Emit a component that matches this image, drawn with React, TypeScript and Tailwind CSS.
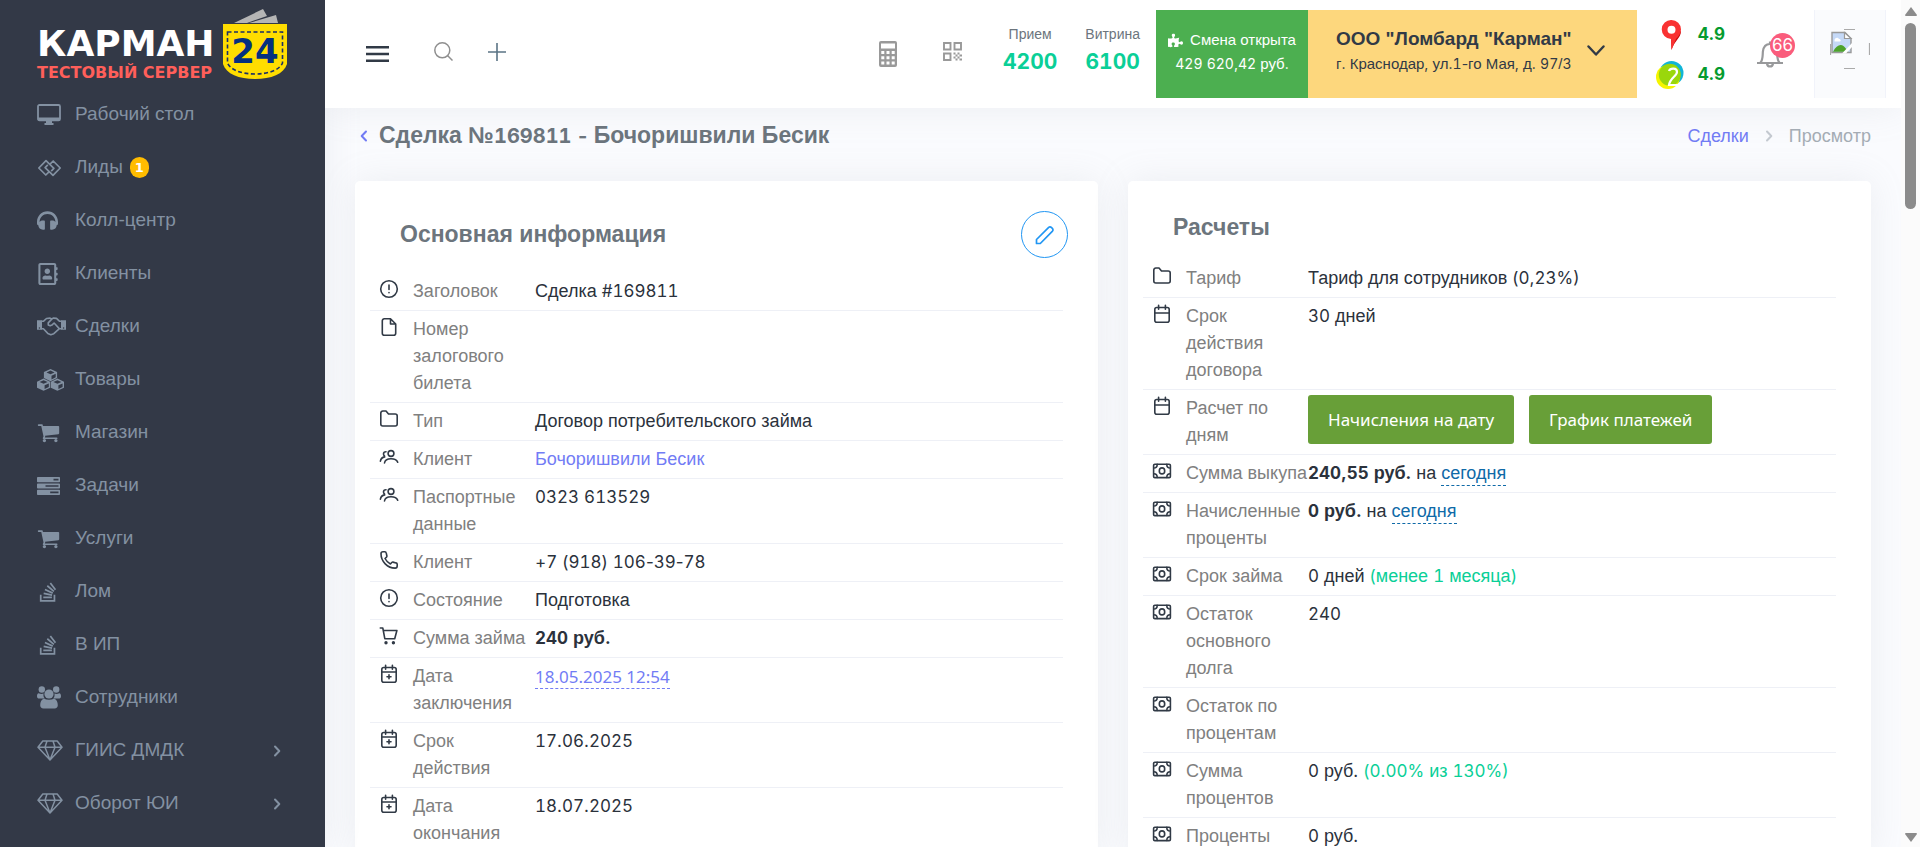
import React from "react";
import { FaHeadphones, FaRegAddressBook, FaStackOverflow, FaPuzzlePiece } from "react-icons/fa";

const ARIAL = "font-['Liberation_Sans',Arial,sans-serif]";

/* Digits and Latin punctuation are set in a rounder face than the Cyrillic letters. */
function T({ children, size = "" }: { children: string; size?: string }) {
  const parts = children.split(/([0-9]+|[#()%+,:.\-]+)/);
  return (
    <>
      {parts.map((p, i) =>
        i % 2 ? (
          <span key={i} className={`font-['Inter',sans-serif] ${/\d/.test(p) ? "tabular-nums" : ""} ${size}`}>{p}</span>
        ) : (
          p
        ),
      )}
    </>
  );
}

/* ---------- sidebar icons ---------- */
const Desktop = () => (
  <svg width="24" height="21" viewBox="0 0 24 21" fill="none">
    <rect x="1" y="1" width="22" height="15.4" rx="1.5" stroke="currentColor" strokeWidth="1.8" />
    <path d="M1 13.5h22v2.2a1 1 0 0 1-1 1H2a1 1 0 0 1-1-1zM9 17h6v2h1.5v2h-9v-2H9z" fill="currentColor" />
  </svg>
);
const LinkIcon = () => (
  <svg width="25" height="18" viewBox="0 0 25 18" fill="none" stroke="currentColor" strokeWidth="1.7" strokeLinejoin="round">
    <path d="M12.5 5.2 9 1.6 1.8 9l7 7 3.4-3.4-4.1-4 2.7-2.8M12.5 12.8 16 16.4 23.2 9l-7-7-3.4 3.4 4.1 4-2.7 2.8" />
  </svg>
);
const Handshake = () => (
  <svg width="29" height="19" viewBox="0 0 29 19" fill="none" stroke="currentColor" strokeWidth="1.6" strokeLinejoin="round" strokeLinecap="round">
    <path d="M0 3.2h5v9.6H0zM24 3.2h5v9.6h-5z" fill="currentColor" stroke="none" />
    <path d="M5 4.2h1.6L9.5 1.5l3.6-.4 1.6.8 1.8-.8 3 .3 2.9 2.8H24M5 11.8h1.4l4.4 4.6 3 1.3 3-1 5.3-4.9H24M15 1.9l-3.8 4 .1 2 1.9.8 1.7-.6 2.2-2.1 5.2 5.6" />
    <circle cx="2.4" cy="11" r=".7" fill="#333947" stroke="none" /><circle cx="26.6" cy="11" r=".7" fill="#333947" stroke="none" />
  </svg>
);
const Cube = ({ x, y }: { x: number; y: number }) => (
  <g transform={`translate(${x} ${y})`}>
    <path d="M0 3.1 6.6 0l6.6 3.1v6L6.6 12.200 0 9.100z" fill="currentColor" />
    <path d="M2.600 3.400 6.600 1.600l4 1.800-4 1.800zM7.600 6.700l4.200-1.900v3.500l-4.200 2.100z" fill="#333947" />
  </g>
);
const Cubes = () => (
  <svg width="27" height="22" viewBox="0 0 27 22">
    <Cube x={6.900} y={0} /><Cube x={0} y={9.600} /><Cube x={13.800} y={9.600} />
  </svg>
);
const Cart = () => (
  <svg width="23" height="23" viewBox="0 0 1792 1792" fill="currentColor">
    <path d="M704 1536q0 52-38 90t-90 38-90-38-38-90 38-90 90-38 90 38 38 90zm896 0q0 52-38 90t-90 38-90-38-38-90 38-90 90-38 90 38 38 90zm128-1088v512q0 24-16.500 42.500t-40.500 21.500l-1044 122q13 60 13 70 0 16-24 64h920q26 0 45 19t19 45-19 45-45 19h-1024q-26 0-45-19t-19-45q0-11 8-31.500t16-36 21.500-40 15.500-29.500l-177-823h-204q-26 0-45-19t-19-45 19-45 45-19h256q16 0 28.500 6.500t19.500 15.500 13 24.500 8 26 5.500 29.500 4.500 26h1201q26 0 45 19t19 45z" />
  </svg>
);
const Tasks = () => (
  <svg width="23" height="18" viewBox="0 0 23 18" fill="currentColor" fillRule="evenodd">
    <path d="M0 .8A.8.8 0 0 1 .8 0h21.400a.8.8 0 0 1 .8.8v3.600a.8.8 0 0 1-.8.8H.8a.8.8 0 0 1-.8-.8zM16.500 1.800v1.600h5V1.800zM0 7.200a.8.8 0 0 1 .8-.8h21.400a.8.8 0 0 1 .8.8v3.600a.8.8 0 0 1-.8.800H.8a.8.8 0 0 1-.8-.8zM8.500 8.200v1.600h13V8.200zM0 13.600a.8.8 0 0 1 .8-.8h21.400a.8.8 0 0 1 .8.8v3.600a.8.8 0 0 1-.8.800H.8a.8.8 0 0 1-.8-.8zM13.200 14.600v1.600h8.300v-1.600z" />
  </svg>
);
const Group = () => (
  <svg width="24" height="23" viewBox="0 0 24 23" fill="currentColor">
    <circle cx="4.800" cy="3.500" r="3.200" /><circle cx="19.200" cy="3.500" r="3.200" /><circle cx="12" cy="8" r="4.600" />
    <path d="M1.600 7.300c2 1 3.600 1 5 .3-.5 2 0 3.600 1.200 5H2.400C.8 12.600 0 11.800 0 10.300c0-1.600.5-3 1.600-3zM22.400 7.300c-2 1-3.600 1-5 .3.500 2 0 3.600-1.200 5h5.400c1.600 0 2.400-.8 2.400-2.300 0-1.600-.5-3-1.600-3zM7 12.700c3 1.500 7 1.500 10 0 2.600.5 3.800 3.300 3.800 6.600 0 2-1.200 3.200-3.200 3.200H6.400c-2 0-3.200-1.200-3.200-3.200 0-3.300 1.200-6.100 3.800-6.600z" />
  </svg>
);
const Gem = () => (
  <svg width="26" height="21" viewBox="0 0 26 21" fill="none" stroke="currentColor" strokeWidth="1.5" strokeLinejoin="round">
    <path d="M5.800 1h14.400L25 7.300 13 20 1 7.300zM1 7.300h24M8 7.300 13 20l5-12.700M10 1 8 7.300M16 1l2 6.300" />
  </svg>
);
const Angle = ({ className = "", flip = false }: { className?: string; flip?: boolean }) => (
  <svg width="8" height="12" viewBox="0 0 8 12" fill="none" stroke="currentColor" strokeWidth="2" strokeLinecap="round" strokeLinejoin="round" className={className}>
    <path d={flip ? "M6 1.500 1.700 6 6 10.500" : "M2 1.500 6.300 6 2 10.500"} />
  </svg>
);

/* ---------- row icons ---------- */
const Line = ({ children }: { children: React.ReactNode }) => (
  <svg width="20" height="20" viewBox="0 0 20 20" fill="none" stroke="currentColor" strokeWidth="1.6" strokeLinecap="round" strokeLinejoin="round" className="block">
    {children}
  </svg>
);
const icons = {
  alert: <Line><circle cx="10" cy="10" r="8.300" /><path d="M10 6v4.500M10 13.500v.2" /></Line>,
  file: <Line><path d="M11.500 1.800H5.300A2 2 0 0 0 3.300 3.800v12.400a2 2 0 0 0 2 2h9.400a2 2 0 0 0 2-2V7zM11.500 1.800V7h5.200" /></Line>,
  folder: <Line><path d="M1.800 4a2 2 0 0 1 2-2h3.200L9.500 5h6.700a2 2 0 0 1 2 2v8a2 2 0 0 1-2 2H3.800a2 2 0 0 1-2-2z" /></Line>,
  users: <Line><circle cx="12" cy="6.500" r="2.900" /><path d="M5.500 16c.4-3 2.800-4.300 6.500-4.300s5.900 1.200 6.700 3.600M7 4.800c-1.500 0-2.500.9-2.500 2.200 0 .9.400 1.500 1 1.900M1.400 14.200c.4-2.400 1.900-3.900 4.300-4.300" /></Line>,
  phone: <Line><path d="M2 3.800C2 2.600 2.900 1.800 4 1.800h1.900c.7 0 1.200.5 1.300 1.100l.7 3.100c.1.500-.1.900-.4 1.200L6 8.500c1.200 2.300 3 4.200 5.400 5.500l1.400-1.500c.3-.3.800-.5 1.200-.4l3.100.8c.6.100 1.100.7 1.100 1.300V16c0 1.200-.9 2.100-2.100 2.100C8.500 18.100 2 11.500 2 3.800z" /></Line>,
  cart: <Line><path d="M1.300 2h2.500l2 10.700h9.900l2.200-8.200H4.200" /><circle cx="7" cy="16.800" r=".9" fill="currentColor" /><circle cx="14.400" cy="16.800" r=".9" fill="currentColor" /></Line>,
  calPlus: <Line><rect x="2.800" y="3.500" width="14.400" height="14.700" rx="2" /><path d="M2.800 8h14.400M6.600 1.300v4M13.400 1.300v4M10 10.800v4M8 12.800h4" /></Line>,
  cal: <Line><rect x="2.800" y="3.500" width="14.400" height="14.700" rx="2" /><path d="M2.800 9h14.400M6.600 1.300v4M13.400 1.300v4" /></Line>,
  money: <Line><rect x="1.600" y="3.200" width="16.800" height="13.400" rx="1.200" /><ellipse cx="10" cy="9.900" rx="2.700" ry="3" /><path d="M1.800 7C4 7 5.200 5.600 5.200 3.400M18.200 7c-2.200 0-3.400-1.400-3.400-3.600M1.800 12.800c2.200 0 3.400 1.400 3.400 3.600M18.200 12.800c-2.200 0-3.400 1.400-3.400 3.600" /></Line>,
};

function Logo() {
  return (
    <a href="#home" className="flex h-[86px] shrink-0 items-start pt-2 pl-[37px]">
      <span className="mt-[16px] flex w-[185px] flex-col font-['DejaVu_Sans',sans-serif] font-bold whitespace-nowrap">
        <span className="text-[36px] leading-[40px] text-white">КАРМАН</span>
        <span className="text-[16px] leading-[18px] text-[#ff5f5a]">ТЕСТОВЫЙ СЕРВЕР</span>
      </span>
      <svg width="66" height="72" viewBox="0 0 66 72">
        <path d="M12 15 41 1l4 7-20 7zM27 15l27-8 2 8z" fill="#b5b5b5" />
        <path d="M1 16h64v40c-3 10-16 15-32 15S4 66 1 56z" fill="#ffdd00" />
        <path d="M5.500 24h55v31c-3 7-14 11-27.500 11S8.500 62 5.500 55z" fill="none" stroke="#1b2f66" strokeWidth="1.600" strokeDasharray="4 2.500" />
        <text x="33" y="55" textAnchor="middle" fontFamily="DejaVu Sans" fontWeight="bold" fontSize="34" fill="#05307f">24</text>
      </svg>
    </a>
  );
}

const menu: { icon: React.ReactNode; label: string; badge?: string; sub?: boolean }[] = [
  { icon: <Desktop />, label: "Рабочий стол" },
  { icon: <LinkIcon />, label: "Лиды", badge: "1" },
  { icon: <FaHeadphones size={21} />, label: "Колл-центр" },
  { icon: <FaRegAddressBook size={22} />, label: "Клиенты" },
  { icon: <Handshake />, label: "Сделки" },
  { icon: <Cubes />, label: "Товары" },
  { icon: <Cart />, label: "Магазин" },
  { icon: <Tasks />, label: "Задачи" },
  { icon: <Cart />, label: "Услуги" },
  { icon: <FaStackOverflow size={22} />, label: "Лом" },
  { icon: <FaStackOverflow size={22} />, label: "В ИП" },
  { icon: <Group />, label: "Сотрудники" },
  { icon: <Gem />, label: "ГИИС ДМДК", sub: true },
  { icon: <Gem />, label: "Оборот ЮИ", sub: true },
];

function Sidebar() {
  return (
    <aside className="z-10 flex w-[325px] shrink-0 flex-col overflow-hidden bg-[#333947] shadow-[0_0_35px_rgba(154,161,171,0.15)]">
      <Logo />
      <nav className="flex flex-col text-[19px] text-[#8391a2]">
        {menu.map((m) => (
          <a key={m.label} href="#menu" className="flex h-[53px] shrink-0 items-center pt-1 pr-[44px] pl-[37px]">
            <span className="flex w-[38px] items-center">{m.icon}</span>
            <span>{m.label}</span>
            {m.badge && (
              <span className="ml-[7px] flex h-[21px] w-[19px] items-center justify-center rounded-full bg-[#ffbc00] font-['DejaVu_Sans'] text-[13px] font-bold text-white">{m.badge}</span>
            )}
            {m.sub && <Angle className="ml-auto" />}
          </a>
        ))}
      </nav>
    </aside>
  );
}

function Counter({ label, value }: { label: string; value: string }) {
  return (
    <div className="flex flex-col items-center">
      <span className="text-[14px] leading-[20px] text-[#6c757d]">{label}</span>
      <span className="font-['Inter'] text-[21px] leading-[36px] font-bold text-[#0acf97] tabular-nums">{value}</span>
    </div>
  );
}

function Header() {
  return (
    <header className="z-20 flex h-[108px] shrink-0 items-center bg-white pr-[15px] pl-[41px] shadow-[0_0_35px_rgba(154,161,171,0.15)]">
      <button aria-label="Меню">
        <svg width="23" height="16" viewBox="0 0 23 16" fill="#313a46"><path d="M0 0h23v2.600H0zM0 6.700h23v2.600H0zM0 13.400h23V16H0z" /></svg>
      </button>
      <button aria-label="Поиск" className="ml-[45px] pb-1.5">
        <svg width="19" height="19" viewBox="0 0 19 19" fill="none" stroke="#8f8f8f" strokeWidth="1.500"><circle cx="8.300" cy="8.300" r="7.500" /><path d="m13.500 13.500 5 5" /></svg>
      </button>
      <button aria-label="Добавить" className="ml-[35px] pb-1">
        <svg width="18" height="18" viewBox="0 0 18 18" stroke="#5b7485" strokeWidth="1.600"><path d="M9 0v18M0 9h18" /></svg>
      </button>

      <div className="ml-auto flex items-center">
        <button aria-label="Калькулятор" className="mr-[46px]">
          <svg width="18" height="26" viewBox="0 0 18 26" fill="#999" fillRule="evenodd">
            <path d="M2 0h14a2 2 0 0 1 2 2v22a2 2 0 0 1-2 2H2a2 2 0 0 1-2-2V2a2 2 0 0 1 2-2zM2 2.600v5h14v-5zM2.300 10v3h3v-3zM7.500 10v3h3v-3zM12.700 10v3h3v-3zM2.300 15.200v3h3v-3zM7.500 15.200v3h3v-3zM12.700 15.200v3h3v-3zM2.300 20.400v3h3v-3zM7.500 20.400v3h3v-3zM12.700 20.400v3h3v-3z" />
          </svg>
        </button>
        <button aria-label="QR-код" className="mr-[41px] pb-1.5">
          <svg width="19" height="19" viewBox="0 0 19 19">
            <path d="M1 1h6.500v6.500H1zM11.500 1H18v6.500h-6.500zM1 11.500h6.500V18H1z" fill="none" stroke="#999" strokeWidth="1.900" />
            <path d="M10.500 10.500h2v2h-2zM14.500 10.500h2v2h-2zM12.500 12.500h2v2h-2zM16.500 12.500H19v2h-2.500zM10.500 14.500h2v2h-2zM14.500 14.500h2v2h-2zM12.500 16.500h2v2h-2zM16.500 16.500H19v2h-2.500z" fill="#999" />
          </svg>
        </button>
        <div className="mr-4 flex gap-7 pb-1">
          <Counter label="Прием" value="4200" />
          <Counter label="Витрина" value="6100" />
        </div>
        <div className="flex h-[88px] w-[152px] flex-col items-center justify-center bg-[#4caf50] pb-1 text-[15px] leading-6 text-white">
          <span className="flex items-center gap-[7px]"><FaPuzzlePiece size={15} />Смена открыта</span>
          <span><T size="text-[14px]">429 620,42 руб.</T></span>
        </div>
        <button className="flex h-[88px] w-[329px] items-center justify-between bg-[#fdd77d] pr-[32px] pl-[28px] text-left text-[#313a46]">
          <span className="flex flex-col pb-1.5 whitespace-nowrap">
            <b className="text-[19px] leading-[26px]">ООО "Ломбард "Карман"</b>
            <span className="text-[15px] leading-6"><T size="text-[14px]">г. Краснодар, ул.1-го Мая, д. 97/3</T></span>
          </span>
          <svg width="18" height="11" viewBox="0 0 18 11" fill="none" stroke="#313a46" strokeWidth="2.400" strokeLinecap="round" strokeLinejoin="round" className="mb-2"><path d="m1.500 1.500 7.500 8 7.500-8" /></svg>
        </button>
        <div className="ml-[19px] flex w-[69px] flex-col gap-[11px] font-['Inter'] text-[17px] leading-none font-bold text-[#059b2e]">
          <span className="flex items-center justify-between">
            <svg width="28" height="30" viewBox="0 0 28 30">
              <path d="M16 16 25 11c0 7-7 10-9.500 19L15 18z" fill="#c90a0a" />
              <path fillRule="evenodd" d="M15.500 0a9.500 9.500 0 0 1 9.500 9.500c0 4-2.500 7-5 9.500L15.500 30l-.5-11A9.500 9.500 0 0 1 15.500 0zm0 5.800a4 4 0 1 0 0 8 4 4 0 0 0 0-8z" fill="#f93232" />
            </svg>4.9
          </span>
          <span className="flex items-center justify-between">
            <svg width="28" height="28" viewBox="0 0 28 28">
              <circle cx="15.500" cy="12" r="12" fill="#10b5d8" /><circle cx="12" cy="16" r="12" fill="#f5f500" /><circle cx="13.800" cy="13.700" r="11" fill="#9ad70c" />
              <path d="M13 10c1-3 8-3.500 8 1 0 4-7 6-8 13h10" fill="none" stroke="#fff" strokeWidth="2.200" />
            </svg>4.9
          </span>
        </div>
        <button aria-label="Уведомления" className="relative mb-2 ml-[32px] h-[34px] w-[38px]">
          <svg width="26" height="28" viewBox="0 0 26 28" fill="none" stroke="#98999b" strokeWidth="2.200" className="mt-[7px]">
            <path d="M0 23h26M3.500 22.500c2.500-3 2-6 2.400-11C6.500 6.500 9 4 13 4s6.500 2.500 7 7.500c.4 5-.1 8 2.400 11M13 4V1.500M10 23.500c.5 4 5.500 4 6 0" />
          </svg>
          <span className="absolute top-0 right-0 flex size-[25px] items-center justify-center rounded-full bg-[#fa5c7c] font-['Inter'] text-[17px] text-white">66</span>
        </button>
        <div className="ml-[19px] flex h-[88px] w-[72px] items-start justify-center border-x border-[#f1f3fa] bg-[#fafbfd] pt-[19px]">
          <svg width="40" height="40" viewBox="0 0 40 40">
            <path d="M14 .5h11M14 39.500h11M.5 15v11M39.500 14v12" stroke="#aaa" strokeWidth="1.200" />
            <path d="M2 3.500h13l6 6v14H2z" fill="#c5d9f7" stroke="#999" strokeWidth="1.400" />
            <path d="M14.500 3.500v6H21z" fill="#fff" stroke="#999" strokeWidth="1.200" />
            <path d="M3 22.800c4-8 9.500-9 13-3l2 3z" fill="#4ea32c" />
            <path d="M4.500 11.500c0-3 3.500-3.500 4.500-1.500 2 0 2.500 2.500.5 2.500h-5z" fill="#fff" />
            <path d="M12 24.500 22 14v4l-6 6.500z" fill="#fff" />
          </svg>
        </div>
      </div>
    </header>
  );
}

type Item = { icon: keyof typeof icons; label: string; value?: React.ReactNode };

function Rows({ items }: { items: Item[] }) {
  return (
    <dl className="mr-[35px] ml-[15px]">
      {items.map((r, i) => (
        <div key={i} className="flex border-b border-[#eef0f6] px-[9px] py-[5px] text-[18px] leading-[27px]">
          <span className="w-[34px] shrink-0 pt-px text-[#313a46]">{icons[r.icon]}</span>
          <dt className="w-[122px] shrink-0 text-[#808080]">{r.label}</dt>
          <dd className="text-[#2b323c]">{r.value}</dd>
        </div>
      ))}
    </dl>
  );
}

const N = ({ children }: { children: string }) => <T size="text-[17px]">{children}</T>;
const Today = () => (
  <a href="#today" className="border-b border-dashed border-[#0f6aa8] pb-[2px] text-[#0f6aa8]">сегодня</a>
);
const GreenButton = ({ children }: { children: string }) => (
  <button className="h-[49px] rounded-[3px] bg-[#689f38] px-[20px] font-['Noto_Sans'] text-[17px] text-white">{children}</button>
);

const mainInfo: Item[] = [
  { icon: "alert", label: "Заголовок", value: <N>Сделка #169811</N> },
  { icon: "file", label: "Номер залогового билета" },
  { icon: "folder", label: "Тип", value: "Договор потребительского займа" },
  { icon: "users", label: "Клиент", value: <a href="#client" className="text-[#727cf5]">Бочоришвили Бесик</a> },
  { icon: "users", label: "Паспортные данные", value: <N>0323 613529</N> },
  { icon: "phone", label: "Клиент", value: <N>+7 (918) 106-39-78</N> },
  { icon: "alert", label: "Состояние", value: "Подготовка" },
  { icon: "cart", label: "Сумма займа", value: <b><N>240 руб.</N></b> },
  { icon: "calPlus", label: "Дата заключения", value: <a href="#date" className="border-b border-dashed border-[#727cf5] font-['Noto_Sans'] text-[17px] text-[#727cf5]">18.05.2025 12:54</a> },
  { icon: "calPlus", label: "Срок действия", value: <N>17.06.2025</N> },
  { icon: "calPlus", label: "Дата окончания", value: <N>18.07.2025</N> },
];

const calc: Item[] = [
  { icon: "folder", label: "Тариф", value: <N>Тариф для сотрудников (0,23%)</N> },
  { icon: "cal", label: "Срок действия договора", value: <N>30 дней</N> },
  { icon: "cal", label: "Расчет по дням", value: <span className="flex gap-[15px]"><GreenButton>Начисления на дату</GreenButton><GreenButton>График платежей</GreenButton></span> },
  { icon: "money", label: "Сумма выкупа", value: <><b><N>240,55 руб.</N></b> на <Today /></> },
  { icon: "money", label: "Начисленные проценты", value: <><b><N>0 руб.</N></b> на <Today /></> },
  { icon: "money", label: "Срок займа", value: <><N>0 дней</N> <span className="text-[#0acf97]"><N>(менее 1 месяца)</N></span></> },
  { icon: "money", label: "Остаток основного долга", value: <N>240</N> },
  { icon: "money", label: "Остаток по процентам" },
  { icon: "money", label: "Сумма процентов", value: <><N>0 руб.</N> <span className="text-[#0acf97]"><N>(0.00% из 130%)</N></span></> },
  { icon: "money", label: "Проценты", value: <N>0 руб.</N> },
];

const CARD = "min-w-0 flex-1 rounded-[5px] bg-white shadow-[0_0_35px_rgba(154,161,171,0.15)]";

export default function App() {
  return (
    <div className={`flex h-screen overflow-hidden bg-[#fafbfe] ${ARIAL}`}>
      <Sidebar />
      <div className="flex min-w-0 flex-1 flex-col overflow-hidden">
        <Header />
        <main className="flex min-h-0 flex-1 flex-col px-[30px]">
          <div className="flex h-[73px] shrink-0 items-start justify-between pt-3">
            <h1 className="flex items-center text-[23px] leading-[30px] font-bold text-[#6c757d]">
              <a href="#back" aria-label="Назад" className="w-[24px] pl-[5px] text-[#727cf5]"><Angle flip /></a>
              <span><T size="text-[20px]">Сделка №169811 - Бочоришвили Бесик</T></span>
            </h1>
            <nav className="flex items-center text-[18px] leading-[32px]">
              <a href="#deals" className="text-[#727cf5]">Сделки</a>
              <Angle className="mx-4 text-[#c5cad1]" />
              <span className="text-[#a5adb5]">Просмотр</span>
            </nav>
          </div>
          <div className="flex gap-[30px]">
            <section className={CARD}>
              <div className="flex h-[92px] items-start justify-between pt-[30px] pr-[30px] pl-[45px]">
                <h2 className="pt-2 text-[23px] leading-[30px] font-bold text-[#6c757d]">Основная информация</h2>
                <button aria-label="Редактировать" className="flex size-[47px] items-center justify-center rounded-full border border-[#2196f3] text-[#2196f3]">
                  <svg width="20" height="20" viewBox="0 0 20 20" fill="none" stroke="currentColor" strokeWidth="1.700" strokeLinejoin="round"><path d="M1.500 18.500v-4L13.700 2.300c1.800-1.600 5.400 1.600 3.800 3.800L5.300 18.500z" /></svg>
                </button>
              </div>
              <Rows items={mainInfo} />
            </section>
            <section className={CARD}>
              <div className="h-[79px] pt-[31px] pl-[45px]">
                <h2 className="text-[23px] leading-[30px] font-bold text-[#6c757d]">Расчеты</h2>
              </div>
              <Rows items={calc} />
            </section>
          </div>
        </main>
      </div>
      <div aria-hidden="true" className="z-30 flex w-[19px] shrink-0 flex-col items-center justify-between bg-[#fbfbfb] pt-[7px] pb-[5px]">
        <div className="flex flex-col items-center gap-[7px]">
          <svg width="12" height="9" viewBox="0 0 12 9" fill="#8b8b8b"><path d="M6 0 12 8q0 1-1 1H1Q0 9 0 8z" /></svg>
          <div className="h-[186px] w-[11px] rounded-full bg-[#8b8b8b]" />
        </div>
        <svg width="12" height="9" viewBox="0 0 12 9" fill="#8b8b8b"><path d="M6 9 12 1q0-1-1-1H1Q0 0 0 1z" /></svg>
      </div>
    </div>
  );
}
